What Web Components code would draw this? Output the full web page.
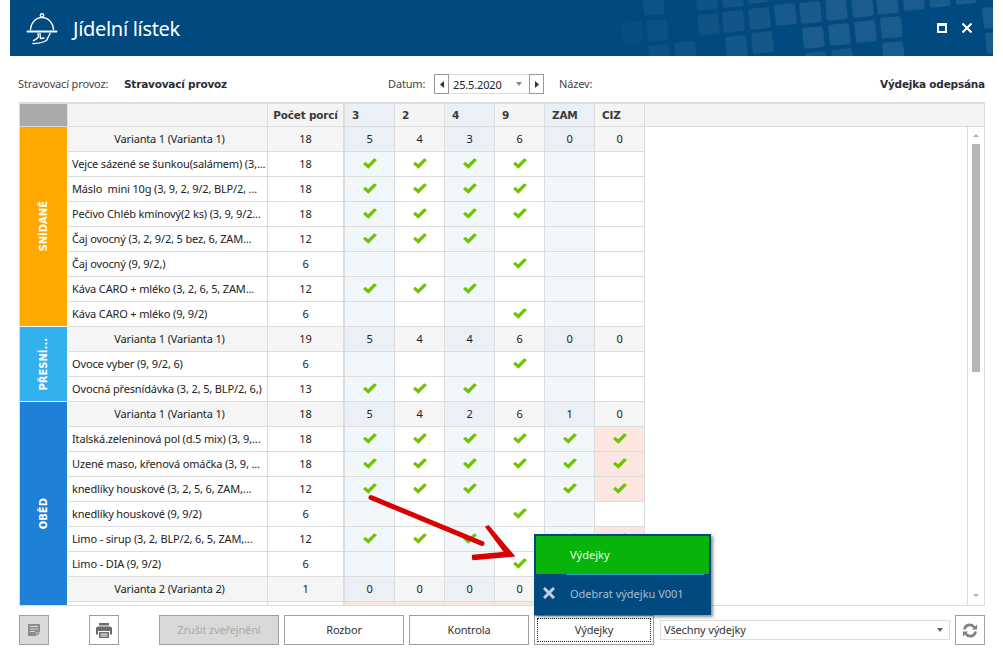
<!DOCTYPE html>
<html lang="cs">
<head>
<meta charset="utf-8">
<title>Jídelní lístek</title>
<style>
  html, body { margin: 0; background: #fff; }
</style>
</head>
<body>
<app-window>
  <title-bar slot="title" label="Jídelní lístek"></title-bar>
  <filter-bar></filter-bar>
  <menu-grid>
    <meal-group label="SNÍDANĚ" color="#ffa800" rows="8">
      <meal-row variant name="Varianta 1 (Varianta 1)" count="18" cells="5 4 3 6 0 0"></meal-row>
      <meal-row name="Vejce sázené se šunkou(salámem) (3,..." count="18" cells="x x x x - -"></meal-row>
      <meal-row name="Máslo  mini 10g (3, 9, 2, 9/2, BLP/2, ..." count="18" cells="x x x x - -"></meal-row>
      <meal-row name="Pečivo Chléb kmínový(2 ks) (3, 9, 9/2..." count="18" cells="x x x x - -"></meal-row>
      <meal-row name="Čaj ovocný (3, 2, 9/2, 5 bez, 6, ZAM..." count="12" cells="x x x - - -"></meal-row>
      <meal-row name="Čaj ovocný (9, 9/2,)" count="6" cells="- - - x - -"></meal-row>
      <meal-row name="Káva CARO + mléko (3, 2, 6, 5, ZAM..." count="12" cells="x x x - - -"></meal-row>
      <meal-row name="Káva CARO + mléko (9, 9/2)" count="6" cells="- - - x - -"></meal-row>
    </meal-group>
    <meal-group label="PŘESNÍ..." color="#35b0ef" rows="3">
      <meal-row variant name="Varianta 1 (Varianta 1)" count="19" cells="5 4 4 6 0 0"></meal-row>
      <meal-row name="Ovoce vyber (9, 9/2, 6)" count="6" cells="- - - x - -"></meal-row>
      <meal-row name="Ovocná přesnídávka (3, 2, 5, BLP/2, 6,)" count="13" cells="x x x - - -"></meal-row>
    </meal-group>
    <meal-group label="OBĚD" color="#1f80d8" rows="9">
      <meal-row variant name="Varianta 1 (Varianta 1)" count="18" cells="5 4 2 6 1 0"></meal-row>
      <meal-row name="Italská.zeleninová pol (d.5 mix) (3, 9,..." count="18" cells="x x x x x x!"></meal-row>
      <meal-row name="Uzené maso, křenová omáčka (3, 9, ..." count="18" cells="x x x x x x!"></meal-row>
      <meal-row name="knedlíky houskové (3, 2, 5, 6, ZAM,..." count="12" cells="x x x - x x!"></meal-row>
      <meal-row name="knedlíky houskové (9, 9/2)" count="6" cells="- - - x - -"></meal-row>
      <meal-row name="Limo - sirup (3, 2, BLP/2, 6, 5, ZAM,..." count="12" cells="x x x - x x!"></meal-row>
      <meal-row name="Limo - DIA (9, 9/2)" count="6" cells="- - - x - -"></meal-row>
      <meal-row variant name="Varianta 2 (Varianta 2)" count="1" cells="0 0 0 0 - -"></meal-row>
      <meal-row cells="-! -! -! -! -! -!"></meal-row>
    </meal-group>
  </menu-grid>
  <action-bar></action-bar>
  <issue-popup slot="overlay"></issue-popup>
</app-window>

<script>
const FONT = `"Noto Sans", "DejaVu Sans", sans-serif`;
const BORDER = "#dcdcdc";

class AppWindow extends HTMLElement {
  constructor() {
    super();
    this.attachShadow({ mode: "open" });
  }

  connectedCallback() {
    this.shadowRoot.innerHTML = `
    <style>
      :host {
        display: block;
        position: relative;
        width: 983px;
        height: 663px;
        margin: 0 10px;
        font: 11px ${FONT};
        letter-spacing: -.15px;
        color: #222;
        overflow: hidden;
      }
      .content { padding: 0 8px 0 9px; }
      svg { position: absolute; left: 0; top: 0; pointer-events: none; }
    </style>
    <slot name="title"></slot>
    <div class="content"><slot></slot></div>
    <slot name="overlay"></slot>
    <svg width="983" height="663" viewBox="10 0 983 663">
      <path d="M371 497.500L482 543.500" stroke="#d90000" stroke-width="5" stroke-linecap="round"/>
      <polygon points="486,527 488.500,526 514,556 473,559.500 472.500,555.500 505,552.500" fill="#d90000" stroke="#d90000" stroke-width="1.500" stroke-linejoin="round"/>
    </svg>
    `;
  }
}

class TitleBar extends HTMLElement {
  constructor() {
    super();
    this.attachShadow({ mode: "open" });
  }

  // [x, y, opacity] of the rounded squares in the header pattern
  static get tiles() {
    return [
      [643, -5, .05], [647, 21, .04], [622, 23, .02], [649, 46, .04], [675, 43, .05],
      [696, -10, .06], [722, -13, .07], [747, -17, .08], [698, 15, .05], [723, 12, .07],
      [749, 9, .08], [775, 5, .09], [800, 3, .09], [826, 0, .1], [852, -3, .1], [877, -6, .1],
      [903, -10, .1], [929, -13, .1], [955, -16, .1], [726, 37, .08], [752, 33, .08],
      [803, 28, .1], [829, 25, .1], [855, 22, .1], [881, 18, .1], [806, 53, .08], [832, 50, .08],
      [883, 43, .1], [983, 8, .1], [986, 33, .1]
    ];
  }

  connectedCallback() {
    const tiles = TitleBar.tiles.map(([x, y, o]) =>
      `<rect x="${x - 10}" y="${y}" width="21" height="21" rx="2.5" fill="#fff" fill-opacity="${o}" transform="rotate(-6 ${x - 9.5} ${y + 10.5})"/>`).join("");
    this.shadowRoot.innerHTML = `
    <style>
      :host {
        display: flex;
        align-items: center;
        position: relative;
        height: 56px;
        background: #004a80;
        color: #fff;
        overflow: hidden;
      }
      .pattern { position: absolute; left: 0; top: 0; }
      .logo { margin: -3px 0 0 15px; flex: none; position: relative; }
      h1 {
        margin: 0 0 0 12px;
        font: 400 20px ${FONT};
        letter-spacing: -.3px;
        position: relative;
      }
      .controls {
        margin-left: auto;
        margin-right: 21px;
        display: flex;
        gap: 15px;
        position: relative;
      }
    </style>
    <svg class="pattern" width="983" height="56">${tiles}</svg>
    <svg class="logo" width="36" height="36" viewBox="0 0 36 36" fill="none" stroke="#fff" stroke-width="1.4" stroke-linecap="round" stroke-linejoin="round">
      <circle cx="17" cy="6.500" r="1.700"/>
      <path d="M5.500 20.500C6 13.500 11 8.500 17 8.500S28 13.500 28.500 20.500"/>
      <path d="M2.500 22.500H31.500" stroke-width="1.800"/>
      <path d="M13 24.500L13.500 28C12 29.500 10 31 8.500 31.500"/>
      <path d="M25 24.500L21.500 31.500C18 33.500 12 34.500 8 34.500"/>
      <path d="M15 24.500L15.500 29.500L19 29"/>
    </svg>
    <h1>${this.getAttribute("label")}</h1>
    <div class="controls">
      <svg width="10" height="10" viewBox="0 0 10 10"><path fill="#fff" fill-rule="evenodd" d="M0 0H10V10H0ZM2 3V8H8V3Z"/></svg>
      <svg width="10" height="10" viewBox="0 0 10 10"><path stroke="#fff" stroke-width="2" d="M.5 .5L9.500 9.500M9.500 .5L.5 9.500"/></svg>
    </div>
    `;
  }
}

class FilterBar extends HTMLElement {
  constructor() {
    super();
    this.attachShadow({ mode: "open" });
  }

  connectedCallback() {
    this.shadowRoot.innerHTML = `
    <style>
      :host {
        display: flex;
        align-items: center;
        height: 46px;
        padding-top: 10px;
        box-sizing: border-box;
      }
      b { font: 700 10.5px "DejaVu Sans", sans-serif; letter-spacing: -.2px; color: #2b2b36; }
      .label { color: #444; padding-bottom: 2px; }
      .provoz { width: 105px; margin-left: -1px; padding-right: 1px; }
      .value { width: 264px; }
      .datum { width: 46px; }
      .date { display: flex; height: 20px; margin-right: 15px; }
      .spin {
        width: 15px;
        box-sizing: border-box;
        border: 1px solid #999;
        display: flex;
        align-items: center;
        justify-content: center;
      }
      .input {
        width: 80px;
        box-sizing: border-box;
        border: solid #ddd;
        border-width: 1px 0;
        display: flex;
        align-items: center;
        padding: 0 4px;
        color: #222;
      }
      .input i {
        margin-left: auto;
        border: solid transparent;
        border-width: 4px 3.500px 0;
        border-top-color: #888;
        margin-right: 3px;
      }
      .state { margin-left: auto; }
    </style>
    <span class="label provoz">Stravovací provoz:</span>
    <b class="value">Stravovací provoz</b>
    <span class="label datum">Datum:</span>
    <div class="date">
      <div class="spin"><svg width="4" height="7"><path d="M4 0V7L0 3.500Z" fill="#333"/></svg></div>
      <div class="input">25.5.2020<i></i></div>
      <div class="spin"><svg width="4" height="7"><path d="M0 0V7L4 3.500Z" fill="#333"/></svg></div>
    </div>
    <span class="label">Název:</span>
    <b class="state">Výdejka odepsána</b>
    `;
  }
}

class MenuGrid extends HTMLElement {
  constructor() {
    super();
    this.attachShadow({ mode: "open" });
  }

  connectedCallback() {
    const cols = ["3", "2", "4", "9", "ZAM", "CIZ"];
    this.shadowRoot.innerHTML = `
    <style>
      :host {
        display: block;
        box-sizing: border-box;
        height: 504px;
        border: 1px solid ${BORDER};
        overflow: hidden;
      }
      .head {
        display: flex;
        height: 24px;
        box-sizing: border-box;
        background: #f4f4f4;
        border-bottom: 1px solid ${BORDER};
        border-top: 1px solid ${BORDER};
        font: 700 10.5px "DejaVu Sans", sans-serif;
        letter-spacing: -.2px;
        color: #3a3a3a;
      }
      .head div { display: flex; align-items: center; box-sizing: border-box; padding-bottom: 1px; border-right: 1px solid ${BORDER}; }
      .head .corner { width: 48px; background: #aaa; }
      .head .blank { width: 200px; }
      .head .porci { width: 77px; justify-content: center; border-right-width: 2px; }
      .head .col { width: 50px; padding-left: 7px; }
      .head .stripe { background: #eaf0f5; }
      .body { display: flex; height: 478px; }
      .rows { width: 947px; flex: none; overflow: hidden; }
      .scroll {
        width: 17px;
        box-sizing: border-box;
        border-left: 1px solid ${BORDER};
        padding-top: 7px;
        display: flex;
        flex-direction: column;
        align-items: center;
      }
      .thumb { width: 8px; height: 228px; margin-top: 7px; background: #b5b5b5; }
      .up, .down { width: 0; border: solid transparent; border-width: 0 3px; }
      .up { border-bottom: 3px solid #aaa; }
      .down { border-top: 3px solid #aaa; margin-top: auto; margin-bottom: 8px; }
    </style>
    <div class="head">
      <div class="corner"></div>
      <div class="blank"></div>
      <div class="porci">Počet porcí</div>
      ${cols.map((c, i) => `<div class="col ${i % 2 ? "" : "stripe"}">${c}</div>`).join("")}
    </div>
    <div class="body">
      <div class="rows"><slot></slot></div>
      <div class="scroll"><div class="up"></div><div class="thumb"></div><div class="down"></div></div>
    </div>
    `;
  }
}

class MealGroup extends HTMLElement {
  constructor() {
    super();
    this.attachShadow({ mode: "open" });
  }

  connectedCallback() {
    const rows = Number(this.getAttribute("rows"));
    this.shadowRoot.innerHTML = `
    <style>
      :host { display: flex; height: ${rows * 25}px; }
      .tag {
        width: 48px;
        flex: none;
        box-sizing: border-box;
        border-right: 1px solid #fff;
        border-bottom: 1px solid #fff;
        background: ${this.getAttribute("color")};
        color: #fff;
        font: 700 10px "DejaVu Sans", sans-serif;
        letter-spacing: 0;
        display: flex;
        align-items: center;
        justify-content: center;
      }
      .tag span { writing-mode: vertical-rl; transform: rotate(180deg); }
      .list { flex: 1; }
    </style>
    <div class="tag"><span>${this.getAttribute("label")}</span></div>
    <div class="list"><slot></slot></div>
    `;
  }
}

class MealRow extends HTMLElement {
  constructor() {
    super();
    this.attachShadow({ mode: "open" });
  }

  static get check() {
    return `<svg width="14" height="11" viewBox="0 0 14 12" preserveAspectRatio="none"><path fill="#6fc300" d="M0 6.500L2.300 4.200L5.100 6.800L11.200 .3L14 2.300L5.400 11.600Z"/></svg>`;
  }

  cell(value, i) {
    const pink = value.endsWith("!");
    const v = value.replace("!", "");
    const cls = ["cell", i % 2 ? "" : "stripe", pink ? "pink" : ""].join(" ");
    const inner = v === "x" ? MealRow.check : v === "-" ? "" : v;
    return `<div class="${cls}">${inner}</div>`;
  }

  connectedCallback() {
    const isVariant = this.hasAttribute("variant");
    const cells = this.getAttribute("cells").split(" ");
    this.shadowRoot.innerHTML = `
    <style>
      :host {
        display: flex;
        width: 577px;
        height: 25px;
        box-sizing: border-box;
        border-bottom: 1px solid ${BORDER};
        background: ${isVariant ? "#f5f5f5" : "#fff"};
        color: #222;
      }
      div {
        box-sizing: border-box;
        display: flex;
        align-items: center;
        padding-bottom: 1px;
        border-right: 1px solid ${BORDER};
        white-space: pre;
      }
      .name { width: 200px; padding-left: 4px; overflow: hidden; ${isVariant ? "justify-content: center;" : ""} }
      .count { width: 77px; justify-content: center; border-right-width: 2px; }
      .cell { width: 50px; justify-content: center; }
      .stripe { background: ${isVariant ? "#eaf0f5" : "#f2f7fb"}; }
      .pink { background: #fbe6e0; }
    </style>
    <div class="name">${this.getAttribute("name") || ""}</div>
    <div class="count">${this.getAttribute("count") || ""}</div>
    ${cells.map((c, i) => this.cell(c, i)).join("")}
    `;
  }
}

class ActionBar extends HTMLElement {
  constructor() {
    super();
    this.attachShadow({ mode: "open" });
  }

  connectedCallback() {
    this.shadowRoot.innerHTML = `
    <style>
      :host { display: flex; align-items: center; height: 30px; margin-top: 9px; }
      button {
        height: 30px;
        width: 120px;
        margin: 0 0 0 5px;
        padding: 0 0 1px;
        box-sizing: border-box;
        background: #fff;
        border: 1px solid #a0a0a0;
        font: inherit;
        letter-spacing: inherit;
        color: #333;
        display: flex;
        align-items: center;
        justify-content: center;
      }
      button.icon { width: 30px; margin-left: 0; padding: 0; }
      button.off { background: #d9d9d9; color: #aaa; }
      button.gap { margin-left: 40px; }
      button.refresh { margin-left: 5px; }
      .focus { position: relative; }
      .focus span {
        position: absolute;
        inset: 2px;
        padding-bottom: 1px;
        border: 1px dotted #222;
        display: flex;
        align-items: center;
        justify-content: center;
      }
      .combo {
        width: 290px;
        height: 20px;
        margin-left: 6px;
        box-sizing: border-box;
        border: 1px solid #ddd;
        display: flex;
        align-items: center;
        padding: 0 3px 1px;
        color: #333;
      }
      .combo i {
        margin-left: auto;
        margin-right: 3px;
        border: solid transparent;
        border-width: 4px 3.500px 0;
        border-top-color: #666;
      }
    </style>
    <button class="icon off">
      <svg width="12" height="12" viewBox="0 0 12 12" fill="#8c8c8c">
        <path fill-rule="evenodd" d="M0 0H12V8H8V12H0ZM2 2V3H10V2ZM2 4.500V5.500H10V4.500ZM2 7V8H7V7Z"/><path d="M8.500 8.500H12L8.500 12Z"/>
      </svg>
    </button>
    <button class="icon gap">
      <svg width="16" height="15" viewBox="0 0 16 15" fill="#6b6b6b">
        <path d="M3 0H13V2.500H3Z"/>
        <path d="M2 3.500H14Q16 3.500 16 5.500V11.500H14V8H2V11.500H0V5.500Q0 3.500 2 3.500Z"/>
        <path fill-rule="evenodd" d="M3 9H13V15H3ZM4.500 10.500V11.500H11.500V10.500ZM4.500 12.500V13.500H11.500V12.500Z"/>
      </svg>
    </button>
    <button class="off gap">Zrušit zveřejnění</button>
    <button>Rozbor</button>
    <button>Kontrola</button>
    <button class="focus"><span>Výdejky</span></button>
    <div class="combo">Všechny výdejky<i></i></div>
    <button class="icon refresh">
      <svg width="16" height="15" viewBox="0 0 16 16" fill="none" stroke="#808080" stroke-width="2.800">
        <path d="M2 7C2.500 4 5 2 8 2C10 2 11.500 3 12.500 4.500"/>
        <path d="M14 9C13.500 12 11 14 8 14C6 14 4.500 13 3.500 11.500"/>
        <path stroke="none" fill="#808080" d="M15.500 1.500V7H10ZM.5 14.500V9H6Z"/>
      </svg>
    </button>
    `;
  }
}

class IssuePopup extends HTMLElement {
  constructor() {
    super();
    this.attachShadow({ mode: "open" });
  }

  connectedCallback() {
    this.shadowRoot.innerHTML = `
    <style>
      :host {
        position: absolute;
        left: 524px;
        top: 534px;
        width: 177px;
        height: 81px;
        box-sizing: border-box;
        border: 2px solid #004a80;
        background: #004a80;
        box-shadow: 2px 2px 3px rgba(0, 0, 0, .45);
        letter-spacing: 0;
      }
      .on {
        height: 38px;
        box-sizing: border-box;
        background: #08b30a;
        color: #e8fbe8;
        display: flex;
        align-items: center;
        padding: 0 0 2px 34px;
      }
      .rule { height: 1px; margin: 0 5px 0 30px; background: #2a9fd8; }
      .off {
        height: 38px;
        box-sizing: border-box;
        display: flex;
        align-items: center;
        padding-bottom: 2px;
        color: #a8bccf;
      }
      .off svg { margin: 0 15px 0 7px; }
    </style>
    <div class="on">Výdejky</div>
    <div class="rule"></div>
    <div class="off">
      <svg width="12" height="12" viewBox="0 0 12 12"><path stroke="#c3cfdb" stroke-width="3" d="M1 1L11 11M11 1L1 11"/></svg>
      Odebrat výdejku V001
    </div>
    `;
  }
}

customElements.define("app-window", AppWindow);
customElements.define("title-bar", TitleBar);
customElements.define("filter-bar", FilterBar);
customElements.define("menu-grid", MenuGrid);
customElements.define("meal-group", MealGroup);
customElements.define("meal-row", MealRow);
customElements.define("action-bar", ActionBar);
customElements.define("issue-popup", IssuePopup);
</script>
</body>
</html>
